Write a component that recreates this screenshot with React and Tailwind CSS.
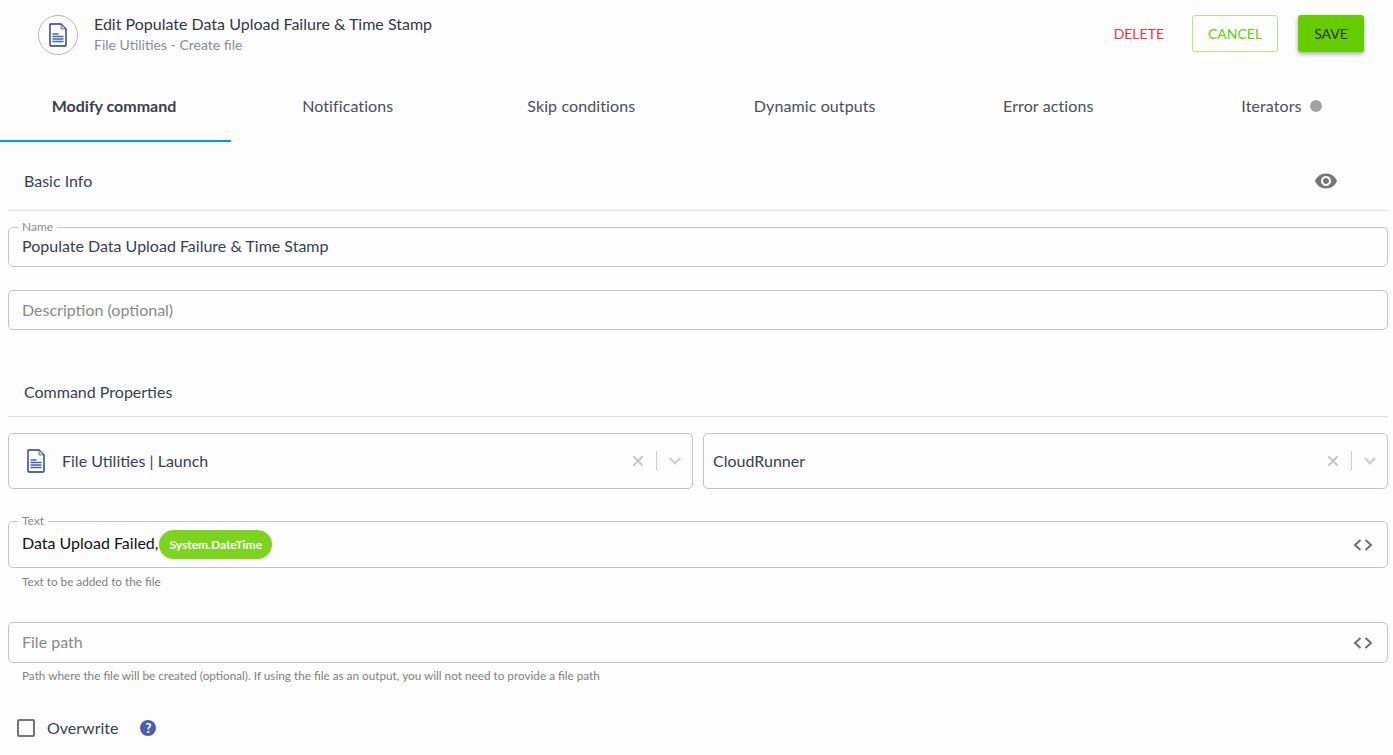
import { ChevronDown, X } from 'lucide-react'

const TABS = ['Modify command', 'Notifications', 'Skip conditions', 'Dynamic outputs', 'Error actions']

function FileIcon({ className }) {
  return (
    <svg viewBox="0 0 18 24" className={className} fill="none">
      <path d="M1.5 1h10.5l5 5v16a1 1 0 0 1-1 1H2a1 1 0 0 1-1-1V1.5z" fill="#fff" stroke="#1f3a8a" strokeWidth="1.4" />
      <path d="M12 1v5h5z" fill="#c7cfe6" stroke="#1f3a8a" strokeWidth="0.6" />
      <path d="M3.5 11h6M3.5 13.5h11M3.5 16h11M3.5 18.5h11" stroke="#4a62a8" strokeWidth="1.3" />
    </svg>
  )
}

function CodeToggle() {
  return (
    <svg viewBox="0 0 20 12" className="h-[12px] w-[20px]" fill="none" stroke="#707070" strokeWidth="2">
      <path d="M7.5 1 2 6l5.5 5M12.5 1 18 6l-5.5 5" />
    </svg>
  )
}

function Field({ label, height, className, children }) {
  return (
    <div className={`relative ml-2 mr-[5px] flex items-center rounded-[5px] border border-[#c4c4c4] pl-[13px] pr-[14px] ${height} ${className || ''}`}>
      {label && (
        <span className="absolute left-[9px] top-[-8px] bg-[#fdfdfe] px-[4px] text-[12px] leading-[13px] text-[#8a8a8a]">
          {label}
        </span>
      )}
      {children}
    </div>
  )
}

function SelectBox({ icon, text, className }) {
  return (
    <div className={`flex h-[56px] items-center rounded-[5px] border border-[#c4c4c4] ${className || ''}`}>
      {icon}
      <span className="flex-1 pb-[1px] text-[16px] text-[#3a3f4b]">{text}</span>
      <X size={16} strokeWidth={3.2} className="text-[#c8c8c8]" />
      <span className="ml-[10px] mr-[9px] h-[20px] w-px bg-[#cfcfcf]" />
      <ChevronDown size={18} strokeWidth={3} className="mr-[8px] text-[#cfcfcf]" />
    </div>
  )
}

export default function App() {
  return (
    <div className="h-screen overflow-hidden bg-[#fdfdfe] font-['Lato',sans-serif] text-[#3a3f4b]">
      {/* Header */}
      <div className="flex h-[72px] items-center pb-[2px] pl-[38px] pr-[29px]">
        <div className="flex h-[40px] w-[40px] items-center justify-center rounded-full border border-[#b8b8b8]">
          <FileIcon className="h-[24px] w-[18px]" />
        </div>
        <div className="ml-[16px] flex-1 pb-[3px]">
          <div className="text-[16px] leading-[22px] text-[#333742]">Edit Populate Data Upload Failure &amp; Time Stamp</div>
          <div className="text-[14px] leading-[20px] text-[#8a8d93]">File Utilities - Create file</div>
        </div>
        <div className="mb-[4px] flex items-center">
          <span className="mr-[28px] text-[14px] text-[#f0333c]">DELETE</span>
          <button className="mr-[20px] h-[37px] w-[86px] rounded-[3px] border border-[#b5e58c] text-[14px] text-[#66cc00]">CANCEL</button>
          <button className="h-[37px] w-[66px] rounded-[3px] bg-[#66cc00] text-[14px] text-[#1f3a0a] shadow-[0_2px_4px_rgba(0,0,0,0.35)]">SAVE</button>
        </div>
      </div>

      {/* Tabs */}
      <div className="flex h-[70px]">
        {TABS.map((tab, i) => (
          <div
            key={tab}
            className={
              i === 0
                ? 'flex w-[231px] shrink-0 items-center justify-center border-b-2 border-[#0096fa] pr-[3px] text-[16px] font-bold text-[#3a3f4b]'
                : 'flex w-[233.5px] shrink-0 items-center justify-center pb-[2px] text-[16px] tracking-[0.1px] text-[#4a4e58]'
            }
          >
            {tab}
          </div>
        ))}
        <div className="flex w-[233px] shrink-0 items-center justify-center gap-[8px] pb-[2px] text-[16px] tracking-[0.1px] text-[#4a4e58]">
          Iterators
          <span className="h-[12px] w-[12px] rounded-full bg-[#a3a3a3]" />
        </div>
      </div>

      {/* Basic info */}
      <div className="ml-2 mr-[5px] flex h-[69px] items-center justify-between border-b border-[#e0e0e0] pl-[16px] pr-[50px] pt-[10px]">
        <span className="text-[16px] text-[#3a3f4b]">Basic Info</span>
        <svg viewBox="0 0 24 24" className="h-[24px] w-[24px] fill-[#757575]">
          <path d="M12 4.5C7 4.5 2.73 7.61 1 12c1.73 4.39 6 7.5 11 7.5s9.27-3.11 11-7.5c-1.73-4.39-6-7.5-11-7.5zM12 17c-2.76 0-5-2.24-5-5s2.24-5 5-5 5 2.24 5 5-2.24 5-5 5zm0-8c-1.66 0-3 1.34-3 3s1.34 3 3 3 3-1.34 3-3-1.34-3-3-3z" />
        </svg>
      </div>

      <Field label="Name" height="h-[40px]" className="mt-[16px]">
        <span className="pb-[2px] text-[16px] text-[#3a3f4b]">Populate Data Upload Failure &amp; Time Stamp</span>
      </Field>
      <Field height="h-[40px]" className="mt-[23px]">
        <span className="text-[16px] text-[#8a8a8a]">Description (optional)</span>
      </Field>

      {/* Command properties */}
      <div className="ml-2 mr-[5px] mt-[38px] flex h-[49px] items-center border-b border-[#e0e0e0] pl-[16px]">
        <span className="text-[16px] text-[#3a3f4b]">Command Properties</span>
      </div>

      <div className="ml-2 mr-[5px] mt-[16px] grid grid-cols-2 gap-[10px]">
        <SelectBox
          text="File Utilities | Launch"
          icon={<FileIcon className="ml-[18px] mr-[17px] h-[24px] w-[18px]" />}
        />
        <SelectBox className="pl-[9px]" text="CloudRunner" />
      </div>

      <Field label="Text" height="h-[47px]" className="mt-[32px]">
        <span className="pb-[3px] text-[16px] text-[#111]">Data Upload Failed,</span>
        <span className="ml-[1px] flex h-[29px] items-center rounded-full bg-[#7ed321] px-[10px] text-[12px] font-bold text-white">System.DateTime</span>
        <span className="flex-1" />
        <CodeToggle />
      </Field>
      <div className="ml-[22px] mt-[6px] text-[11.75px] leading-[16px] text-[#808080]">Text to be added to the file</div>

      <Field height="h-[41px]" className="mt-[32px]">
        <span className="flex-1 pb-[2px] text-[16px] text-[#8a8a8a]">File path</span>
        <CodeToggle />
      </Field>
      <div className="ml-[22px] mt-[5px] text-[11.75px] leading-[16px] text-[#808080]">
        Path where the file will be created (optional). If using the file as an output, you will not need to provide a file path
      </div>

      {/* Overwrite */}
      <div className="ml-[17px] mt-[32px] flex items-center">
        <span className="h-[18px] w-[18px] rounded-[2px] border-2 border-[#757575]" />
        <span className="ml-[12px] text-[16px] text-[#3a3f4b]">Overwrite</span>
        <span className="ml-[22px] flex h-[16px] w-[16px] items-center justify-center rounded-full bg-[#4a5fa5] text-[13px] font-bold leading-none text-white">?</span>
      </div>
    </div>
  )
}
